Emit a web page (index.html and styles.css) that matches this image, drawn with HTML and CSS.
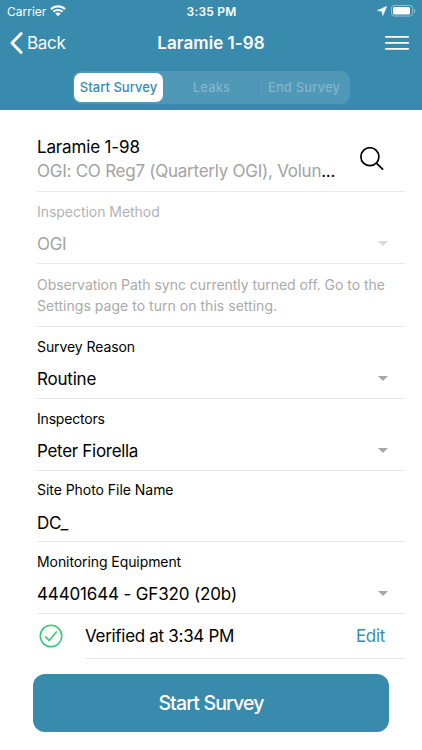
FILE: index.html
```html
<!DOCTYPE html>
<html lang="en">
<head>
<meta charset="utf-8">
<title>Laramie 1-98</title>
<link rel="stylesheet" href="styles.css">
</head>
<body>
<header class="header">
  <div class="status">
    <div class="status-left"><span class="carrier">Carrier</span>
      <svg class="wifi" width="16" height="12" viewBox="0 0 16 12" fill="#fff"><path d="M8 0.3C11 .3 13.7 1.5 15.7 3.4L14.3 4.9A9.2 9.2 0 0 0 1.7 4.9L.3 3.4C2.3 1.5 5 .3 8 .3Z"/><path d="M8 3.9C10 3.9 11.8 4.7 13.2 5.9L11.8 7.4A5.6 5.6 0 0 0 4.2 7.4L2.8 5.9C4.2 4.7 6 3.9 8 3.9Z"/><path d="M8 7.4C9.1 7.4 10 7.8 10.7 8.5L8 11.3 5.3 8.5C6 7.8 6.9 7.4 8 7.4Z"/></svg>
    </div>
    <span class="time">3:35 PM</span>
    <div class="status-right">
      <svg width="10" height="10" viewBox="0 0 10 10"><path d="M9.8.2 5.8 9.8 4.9 5.3.2 4.6Z" fill="#fff" stroke="#fff" stroke-width=".4"/></svg>
      <svg width="25" height="12" viewBox="0 0 25 12"><rect x=".5" y=".5" width="21.2" height="10.6" rx="2.8" fill="none" stroke="#90bed2"/><rect x="2" y="2" width="17" height="7.6" rx="1.5" fill="#fff"/><path d="M23 4v4Q24.3 7.3 24.3 6T23 4Z" fill="#90bed2"/></svg>
    </div>
  </div>
  <nav class="nav">
    <div class="nav-left">
      <svg width="13" height="22" viewBox="0 0 13 22"><path d="M11 1.7 2 11l9 9.3" fill="none" stroke="#fff" stroke-width="3" stroke-linecap="round" stroke-linejoin="round"/></svg>
      <span class="back">Back</span>
    </div>
    <h1 class="title">Laramie 1-98</h1>
    <div class="nav-right"><svg width="24" height="16" viewBox="0 0 24 16"><path d="M.8 1.8h22.4M.8 7.8h22.4M.8 13.8h22.4" stroke="#fff" stroke-width="1.8" stroke-linecap="round"/></svg></div>
  </nav>
  <div class="tabs">
    <span class="tab active">Start Survey</span>
    <span class="tab leaks">Leaks</span>
    <span class="tab last">End Survey</span>
  </div>
</header>
<main class="form">
  <section class="row site">
    <div class="site-text">
      <div class="value site-name">Laramie 1-98</div>
      <div class="value site-sub"><span class="muted">OGI: CO Reg7 (Quarterly OGI), Volun</span>...</div>
    </div>
    <svg class="search" width="24" height="24" viewBox="0 0 24 24" fill="none" stroke="#000" stroke-width="1.7" stroke-linecap="round"><circle cx="9.9" cy="9.7" r="9"/><path d="m16.4 16.2 6.2 6"/></svg>
  </section>
  <section class="row field disabled">
    <div class="label">Inspection Method</div>
    <div class="line"><span class="value">OGI</span><i class="caret"></i></div>
  </section>
  <section class="row note"><div>Observation Path sync currently turned off. Go to the</div><div class="note-end">Settings page to turn on this setting.</div></section>
  <section class="row field">
    <div class="label">Survey Reason</div>
    <div class="line"><span class="value reason">Routine</span><i class="caret"></i></div>
  </section>
  <section class="row field">
    <div class="label inspectors">Inspectors</div>
    <div class="line"><span class="value">Peter Fiorella</span><i class="caret"></i></div>
  </section>
  <section class="row field short">
    <div class="label photo">Site Photo File Name</div>
    <div class="line"><span class="value">DC_</span></div>
  </section>
  <section class="row field">
    <div class="label">Monitoring Equipment</div>
    <div class="line"><span class="value equipment">44401644 - GF320 (20b)</span><i class="caret"></i></div>
  </section>
  <section class="verify">
    <svg class="check" width="24" height="24" viewBox="0 0 24 24" fill="none" stroke="#3acb75" stroke-linecap="round" stroke-linejoin="round"><circle cx="12" cy="12" r="10.7" stroke-width="1.6"/><path d="m6.7 12.9 3.6 3.7 7-8.7" stroke-width="1.6"/></svg>
    <div class="verify-body"><span class="value">Verified at 3:34 PM</span><span class="value edit">Edit</span></div>
  </section>
  <button class="start"><span>Start Survey</span></button>
</main>
</body>
</html>
```
FILE: styles.css
```css
* { box-sizing: border-box; }
body {
  margin: 0;
  height: 750px;
  overflow: hidden;
  background: #fff;
  color: #000;
  font-family: Inter, "Liberation Sans", sans-serif;
}
svg { display: block; flex: none; }
.header { height: 110px; background: #398bae; color: #fff; }
.status {
  display: grid;
  grid-template-columns: 1fr auto 1fr;
  align-items: center;
  height: 22px;
  padding: 0 6px 0 7px;
  font-size: 12px;
}
.status-left { display: flex; align-items: center; gap: 4px; }
.carrier { font-size: 12px; letter-spacing: 0; }
.time { font-weight: 600; letter-spacing: 0.2px; }
.status-right { display: flex; align-items: center; justify-content: flex-end; gap: 4px; }
.nav {
  display: grid;
  grid-template-columns: 1fr auto 1fr;
  align-items: center;
  height: 42px;
  padding: 0 13px 0 10px;
}
.nav-left { display: flex; align-items: center; gap: 4px; }
.back { font-size: 17px; letter-spacing: -0.3px; }
.title { margin: 0 -3px 0 0; font-size: 17px; font-weight: 600; letter-spacing: 0.05px; }
.nav-right { display: flex; justify-content: flex-end; }
.tabs {
  display: grid;
  grid-template-columns: 89px 1fr 91px;
  align-items: center;
  width: 277px;
  height: 33px;
  margin: 7px 0 0 73px;
  padding: 1px;
  border-radius: 9px;
  background: #4f98b7;
}
.tab { font-size: 13px; font-weight: 500; line-height: 29px; text-align: center; color: #82b5cb; letter-spacing: 0.15px; }
.tab.active { height: 29px; border-radius: 7px; background: #fff; color: #398bae; letter-spacing: 0.05px; }
.tab.leaks { padding-left: 2px; }
.tab.last { border-left: 1px solid #488fb1; line-height: 17px; }
.form { padding: 0 17px 0 37px; }
.row { border-bottom: 1px solid #e8e8e8; }
.value { font-size: 17px; line-height: 24px; letter-spacing: -0.3px; white-space: nowrap; }
.site { display: flex; justify-content: space-between; height: 82px; padding: 25px 21px 0 0; }
.site-name { letter-spacing: -0.15px; }
.site-sub { letter-spacing: -0.25px; }
.muted { color: #a3a3a3; }
.search { margin-top: 12px; }
.field { height: 72px; padding: 9px 17px 0 0; }
.field.short { height: 71px; }
.label { font-size: 14px; line-height: 22px; letter-spacing: -0.08px; white-space: nowrap; width: max-content; }
.inspectors { letter-spacing: -0.2px; }
.photo { margin-top: -1px; margin-bottom: 10px; letter-spacing: -0.04px; }
.line { display: flex; align-items: center; justify-content: space-between; height: 24px; margin-top: 9px; }
.reason { letter-spacing: -0.2px; }
.equipment { letter-spacing: -0.15px; }
.caret { margin-top: -1px; border: 5px solid transparent; border-top-color: #a6a6a6; border-bottom: 0; }
.disabled .label { color: #b3b3b3; letter-spacing: -0.04px; }
.disabled .value { color: #a3a3a3; }
.disabled .caret { border-top-color: #d9d9d9; }
.note { height: 63px; padding-top: 10px; font-size: 14px; line-height: 21px; letter-spacing: -0.04px; color: #aaa; white-space: nowrap; }
.note-end { letter-spacing: 0.03px; }
.verify { display: flex; height: 44px; }
.check { margin: 10px 22px 0 2px; }
.verify-body { display: flex; flex: 1; justify-content: space-between; height: 45px; padding: 10px 20px 0 0; border-bottom: 1px solid #e8e8e8; }
.edit { color: #398bae; }
.start {
  display: flex;
  align-items: center;
  justify-content: center;
  width: 356px;
  height: 58px;
  margin: 16px 0 0 -4px;
  padding: 0 0 0 0;
  border: 0;
  border-radius: 12px;
  background: #398bae;
  color: #fff;
  font: 500 19.5px Inter, "Liberation Sans", sans-serif;
  letter-spacing: -0.85px;
}
```
